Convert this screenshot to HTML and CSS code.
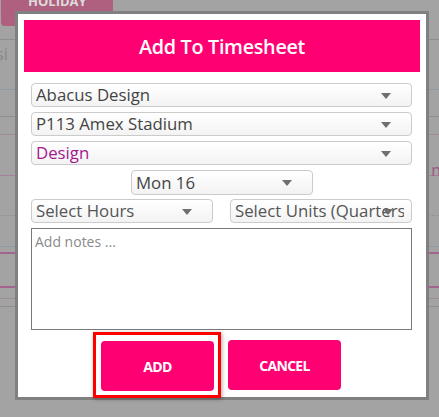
FILE: index.html
```html
<!DOCTYPE html>
<html>
<head>
<meta charset="utf-8">
<link rel="stylesheet" href="styles.css">
</head>
<body>
<div class="page">
  <div class="holiday">HOLIDAY</div>
  <div class="row r1"></div>
  <div class="row r2"><span class="frag-left">si</span></div>
  <div class="row r3"></div>
  <div class="row r4"></div>
  <div class="row r5"><span class="frag-right">n</span></div>
  <div class="row r6"></div>
  <div class="row r7"></div>
  <div class="row r8"></div>
  <div class="row r9"></div>
  <div class="row r10"></div>
  <div class="row r11"></div>
</div>

<div class="modal">
  <div class="modal-inner">
    <div class="modal-header">Add To Timesheet</div>
    <div class="form">
      <div class="select"><span class="val">Abacus Design</span><span class="arrow"></span></div>
      <div class="select"><span class="val">P113 Amex Stadium</span><span class="arrow"></span></div>
      <div class="select"><span class="val accent">Design</span><span class="arrow"></span></div>
      <div class="center-row">
        <div class="select half"><span class="val">Mon 16</span><span class="arrow"></span></div>
      </div>
      <div class="pair-row">
        <div class="select half"><span class="val muted">Select Hours</span><span class="arrow"></span></div>
        <div class="select half units"><span class="val muted">Select Units (Quarters)</span><span class="arrow"></span></div>
      </div>
      <div class="notes">Add notes ...</div>
      <div class="actions">
        <div class="focus-ring"><button class="btn">ADD</button></div>
        <button class="btn">CANCEL</button>
      </div>
    </div>
  </div>
</div>
</body>
</html>
```
FILE: styles.css
```css
html, body {
  margin: 0;
  padding: 0;
}
body {
  width: 439px;
  height: 417px;
  overflow: hidden;
  background: #a3a3a3;
  font-family: "Open Sans", "Liberation Sans", sans-serif;
  position: relative;
}

/* background page (dimmed) */
.page {
  display: flex;
  flex-direction: column;
}
.holiday {
  width: 112px;
  height: 34px;
  margin: -8px 0 0 1px;
  background: #b0607f;
  border-radius: 0 0 4px 4px;
  color: #dcdcdc;
  font-weight: 700;
  font-size: 13px;
  line-height: 18px;
  padding-left: 27px;
  box-sizing: border-box;
}
.row {
  border-bottom: 1px solid #8e8e8e;
  position: relative;
}
.r1 { height: 13px; }
.r2 { height: 49px; border-bottom-color: #9098a4; }
.r3 { height: 26px; }
.r4 { height: 17px; border-bottom-color: #a48a96; }
.r5 { height: 40px; border-bottom-color: #a6809a; }
.r6 { height: 39px; border-bottom: 1px dotted #8f8f8f; }
.r7 { height: 30px; border-bottom-color: #9098a4; }
.r8 { height: 5px; border-bottom: 2px solid #a56490; }
.r9 { height: 32px; border-bottom: 2px solid #a56490; }
.r10 { height: 10px; border-bottom-color: #9a8e94; }
.r11 { height: 7px; }
.frag-left {
  position: absolute;
  left: -4px;
  top: 3px;
  color: #888;
  font-size: 16px;
}
.frag-right {
  position: absolute;
  right: -2px;
  top: 24px;
  color: #a1557f;
  font-size: 16px;
}

/* modal */
.modal {
  position: absolute;
  left: 15px;
  top: 11px;
  width: 414px;
  height: 389px;
  box-sizing: border-box;
  border: 3px solid #808080;
  background: #fff;
}
.modal-inner {
  padding: 6px;
}
.modal-header {
  height: 52px;
  background: #ff0073;
  color: #fff;
  font-weight: 600;
  font-size: 19.8px;
  display: flex;
  align-items: center;
  justify-content: center;
  letter-spacing: -0.3px;
}
.form {
  display: flex;
  flex-direction: column;
  gap: 5px;
  padding: 11px 8px 0 7px;
}
.select {
  position: relative;
  height: 24px;
  box-sizing: border-box;
  border: 1px solid #cbcbcb;
  border-radius: 4px;
  background: linear-gradient(#ffffff, #f3f3f3);
  display: flex;
  align-items: center;
  padding: 0 3px 0 4px;
  overflow: hidden;
  color: #444;
  font-size: 16.8px;
  white-space: nowrap;
}
.val {
  line-height: 22px;
  overflow: hidden;
  min-width: 0;
}
.val.accent { color: #a3168e; }
.val.muted { color: #555; }
.arrow {
  position: absolute;
  right: 20px;
  top: 9px;
  width: 0;
  height: 0;
  border-left: 5px solid transparent;
  border-right: 5px solid transparent;
  border-top: 6px solid #6f6f6f;
}
.half {
  width: 182px;
  flex: none;
}
.center-row {
  display: flex;
  justify-content: center;
  padding-left: 1px;
}
.center-row .select { height: 25px; }
.pair-row {
  display: flex;
  justify-content: space-between;
  margin-top: -1px;
}
.units { padding-right: 7px; }
.units .arrow { right: 18px; }
.notes {
  height: 102px;
  box-sizing: border-box;
  border: 1px solid #7a7a7a;
  padding: 3px 3px;
  color: #8a8a8a;
  font-size: 14px;
  line-height: 20px;
}
.actions {
  display: flex;
  justify-content: center;
  align-items: center;
  gap: 12px;
  margin-top: -3px;
  padding-left: 3px;
}
.focus-ring {
  border: 3px solid #ff0000;
  padding: 6px 4px 4px 5px;
  box-shadow: 1px 1px 4px rgba(0,0,0,0.35);
  margin-left: -12px;
  margin-right: -5px;
}
.btn {
  width: 113px;
  height: 50px;
  border: none;
  border-radius: 4px;
  background: #ff0073;
  color: #fff;
  font-family: "Open Sans", "Liberation Sans", sans-serif;
  font-weight: 700;
  font-size: 14px;
  letter-spacing: -0.7px;
  padding: 0;
  display: block;
}
```
